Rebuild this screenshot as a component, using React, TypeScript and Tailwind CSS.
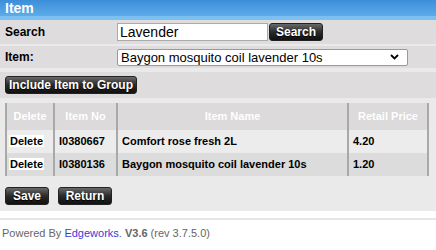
import React from "react";

const rows = [
  { no: "I0380667", name: "Comfort rose fresh 2L", price: "4.20" },
  { no: "I0380136", name: "Baygon mosquito coil lavender 10s", price: "1.20" },
];

const DarkButton = ({ label, className }: { label: string; className?: string }) => (
  <button
    className={
      "h-[18px] whitespace-nowrap rounded-[3px] border border-[#222] bg-gradient-to-b from-[#6a6a6a] via-[#2a2a2a] to-[#111] px-0 text-[12px] font-bold leading-none text-white [text-shadow:0_1px_1px_#000] " +
      (className ?? "")
    }
  >
    {label}
  </button>
);

export default function App() {
  return (
    <div className="h-[250px] w-[436px] bg-white font-['Liberation_Sans',Arial,sans-serif] text-black">
      {/* Title bar */}
      <div className="h-[20px] bg-gradient-to-b from-[#3c8ed8] to-[#5cacea] border-b-[4px] border-[#7cc0f2] flex items-center px-[5px]">
        <span className="text-[14px] font-bold text-white leading-none">Item</span>
      </div>

      <div className="bg-[#eaeaea] pb-[4px]">
        {/* Search */}
        <div className="flex h-[24px] items-center bg-[#dedcdc]">
          <label className="w-[117px] pl-[5px] text-[12px] font-bold">Search</label>
          <input
            defaultValue="Lavender"
            className="h-[18px] w-[151px] border border-[#aaa] bg-white px-[2px] text-[14px] outline-none"
          />
          <DarkButton label="Search" className="ml-[1px] w-[54px]" />
        </div>

        {/* Item select */}
        <div className="mt-[2px] flex h-[22px] items-center bg-[#dedcdc]">
          <label className="w-[117px] pl-[5px] text-[12px] font-bold">Item:</label>
          <div className="flex h-[17px] w-[291px] items-center justify-between rounded-[2px] border border-[#999] bg-white pl-[3px] pr-[8px]">
            <span className="text-[13px] leading-none">Baygon mosquito coil lavender 10s</span>
            <svg width="9" height="6" viewBox="0 0 9 6">
              <path d="M1 1l3.5 3.5L8 1" fill="none" stroke="#000" strokeWidth="1.8" />
            </svg>
          </div>
        </div>

        {/* Include button row */}
        <div className="mt-[4px] flex h-[26px] items-center bg-[#dedcdc] px-[5px]">
          <DarkButton label="Include Item to Group" className="w-[132px]" />
        </div>

        {/* Table */}
        <div className="mt-[5px] px-[5px]">
          <table className="w-[424px] border-collapse text-[11px] font-bold">
            <thead>
              <tr className="h-[27px] bg-[#dcdada] text-white">
                <th className="w-[48px] border-x-2 border-[#a9a9a9] font-bold">Delete</th>
                <th className="w-[63px] border-r-2 border-[#a9a9a9] font-bold">Item No</th>
                <th className="w-[231px] border-r-2 border-[#a9a9a9] font-bold">Item Name</th>
                <th className="border-r-2 border-[#a9a9a9] font-bold">Retail Price</th>
              </tr>
            </thead>
            <tbody>
              {rows.map((r, i) => (
                <tr key={r.no} className={i % 2 === 0 ? "h-[23px] bg-[#ececec]" : "h-[23px] bg-[#dcdcdc]"}>
                  <td className="border-x-2 border-[#a9a9a9] px-[2px]">
                    <span className="bg-white px-[1px]">Delete</span>
                  </td>
                  <td className="border-r-2 border-[#a9a9a9] px-[4px]">{r.no}</td>
                  <td className="border-r-2 border-[#a9a9a9] px-[4px]">{r.name}</td>
                  <td className="border-r-2 border-[#a9a9a9] px-[4px]">{r.price}</td>
                </tr>
              ))}
            </tbody>
          </table>
        </div>

        {/* Save / Return */}
        <div className="mt-[11px] flex gap-[9px] px-[5px] pb-[2px]">
          <DarkButton label="Save" className="w-[44px]" />
          <DarkButton label="Return" className="w-[54px]" />
        </div>
      </div>

      {/* Footer */}
      <div className="mt-[7px] border-t-2 border-[#e6e6e6] px-[2px] pt-[5px] text-[11px] text-[#666]">
        Powered By <span className="text-[#3b3bd4]">Edgeworks</span>. <span className="font-bold">V3.6</span> (rev 3.7.5.0)
      </div>
    </div>
  );
}
